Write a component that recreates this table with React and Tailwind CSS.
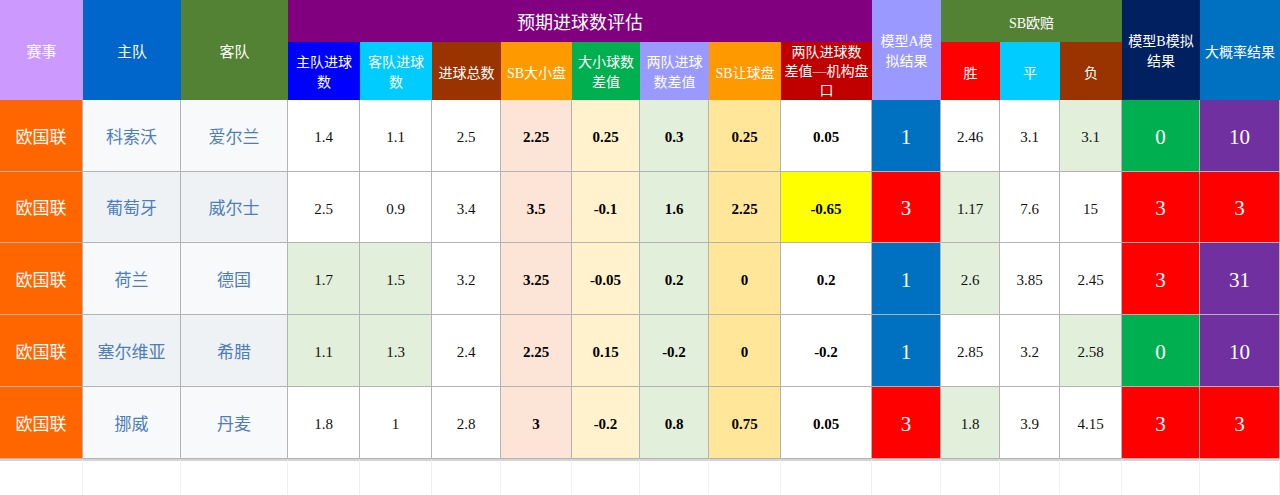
const rows = [
  { home: '科索沃', away: '爱尔兰', h: '1.4', a: '1.1', t: '2.5', ou: '2.25', oud: '0.25', gd: '0.3', hc: '0.25', hcd: '0.05', A: '1', w: '2.46', d: '3.1', l: '3.1', B: '0', P: '10' },
  { home: '葡萄牙', away: '威尔士', h: '2.5', a: '0.9', t: '3.4', ou: '3.5', oud: '-0.1', gd: '1.6', hc: '2.25', hcd: '-0.65', A: '3', w: '1.17', d: '7.6', l: '15', B: '3', P: '3' },
  { home: '荷兰', away: '德国', h: '1.7', a: '1.5', t: '3.2', ou: '3.25', oud: '-0.05', gd: '0.2', hc: '0', hcd: '0.2', A: '1', w: '2.6', d: '3.85', l: '2.45', B: '3', P: '31' },
  { home: '塞尔维亚', away: '希腊', h: '1.1', a: '1.3', t: '2.4', ou: '2.25', oud: '0.15', gd: '-0.2', hc: '0', hcd: '-0.2', A: '1', w: '2.85', d: '3.2', l: '2.58', B: '0', P: '10' },
  { home: '挪威', away: '丹麦', h: '1.8', a: '1', t: '2.8', ou: '3', oud: '-0.2', gd: '0.8', hc: '0.75', hcd: '0.05', A: '3', w: '1.8', d: '3.9', l: '4.15', B: '3', P: '3' },
];

const font = { fontFamily: '"Liberation Serif", "Noto Sans CJK SC", serif' };

const Head = ({ className, children }) => (
  <div className={`flex items-center justify-center text-center text-white ${className}`}>
    {children}
  </div>
);

const Cell = ({ bg, className = '', children }) => (
  <div className={`flex items-center justify-center pt-1 border-r border-b border-[#b3b3b3] ${bg} ${className}`}>
    {children}
  </div>
);

export default function App() {
  return (
    <div className="w-[1280px] h-[495px] bg-white overflow-hidden" style={font}>
      <div className="grid grid-cols-[83px_98px_107px_72px_72px_69px_71px_68px_69px_72px_91px_69px_59px_60px_62px_78px_80px] grid-rows-[42px_58px_72px_71px_72px_72px_72px_36px]">
        <Head className="row-span-2 bg-[#cc99ff] text-[15px] pt-1">赛事</Head>
        <Head className="row-span-2 bg-[#0066cc] text-[15px] pt-1">主队</Head>
        <Head className="row-span-2 bg-[#548235] text-[15px] pt-1">客队</Head>
        <Head className="col-span-8 bg-[#800080] text-[18px] pt-1">预期进球数评估</Head>
        <Head className="row-span-2 bg-[#9999ff] text-[14px] leading-[20px] pt-1">模型A模<br />拟结果</Head>
        <Head className="col-span-3 bg-[#548235] text-[14px] pt-1">SB欧赔</Head>
        <Head className="row-span-2 bg-[#002060] text-[14px] leading-[20px] pt-1">模型B模拟<br />结果</Head>
        <Head className="row-span-2 bg-[#0070c0] text-[14px] pt-1">大概率结果</Head>

        <Head className="bg-[#0000ff] text-[14px] leading-[20px] pt-1">主队进球<br />数</Head>
        <Head className="bg-[#00ccff] text-[14px] leading-[20px] pt-1">客队进球<br />数</Head>
        <Head className="bg-[#993300] text-[14px] pt-1">进球总数</Head>
        <Head className="bg-[#ff9900] text-[14px] pt-1">SB大小盘</Head>
        <Head className="bg-[#00b050] text-[14px] leading-[20px] pt-1">大小球数<br />差值</Head>
        <Head className="bg-[#9999ff] text-[14px] leading-[20px] pt-1">两队进球<br />数差值</Head>
        <Head className="bg-[#ff9900] text-[14px] pt-1">SB让球盘</Head>
        <Head className="bg-[#c00000] text-[14px] leading-[19px]">两队进球数<br />差值—机构盘<br />口</Head>
        <Head className="bg-[#ff0000] text-[14px] pt-1">胜</Head>
        <Head className="bg-[#00ccff] text-[14px] pt-1">平</Head>
        <Head className="bg-[#993300] text-[14px] pt-1">负</Head>

        {rows.map((r, i) => {
          const team = i % 2 === 0 ? 'bg-[#f7f9fb]' : 'bg-[#eef2f4]';
          const goals = i === 2 || i === 3 ? 'bg-[#e2efda]' : 'bg-white';
          const num = 'text-[15px] text-[#111]';
          const bold = 'text-[15px] font-bold text-black';
          const big = 'text-[21px] text-white';
          return [
            <Cell key={`c${i}`} bg="bg-[#ff6600]" className="text-[17px] text-white">欧国联</Cell>,
            <Cell key={`h${i}`} bg={team} className="text-[17px] text-[#4f7dba]">{r.home}</Cell>,
            <Cell key={`a${i}`} bg={team} className="text-[17px] text-[#4f7dba]">{r.away}</Cell>,
            <Cell key={`g1${i}`} bg={goals} className={num}>{r.h}</Cell>,
            <Cell key={`g2${i}`} bg={goals} className={num}>{r.a}</Cell>,
            <Cell key={`t${i}`} bg="bg-white" className={num}>{r.t}</Cell>,
            <Cell key={`ou${i}`} bg="bg-[#fce4d6]" className={bold}>{r.ou}</Cell>,
            <Cell key={`oud${i}`} bg="bg-[#fff2cc]" className={bold}>{r.oud}</Cell>,
            <Cell key={`gd${i}`} bg="bg-[#e2efda]" className={bold}>{r.gd}</Cell>,
            <Cell key={`hc${i}`} bg="bg-[#ffe699]" className={bold}>{r.hc}</Cell>,
            <Cell key={`hcd${i}`} bg={i === 1 ? 'bg-[#ffff00]' : 'bg-white'} className={bold}>{r.hcd}</Cell>,
            <Cell key={`A${i}`} bg={r.A === '1' ? 'bg-[#0070c0]' : 'bg-[#ff0000]'} className={big}>{r.A}</Cell>,
            <Cell key={`w${i}`} bg={i === 1 || i === 2 || i === 4 ? 'bg-[#e2efda]' : 'bg-white'} className={num}>{r.w}</Cell>,
            <Cell key={`d${i}`} bg="bg-white" className={num}>{r.d}</Cell>,
            <Cell key={`l${i}`} bg={i === 0 || i === 3 ? 'bg-[#e2efda]' : 'bg-white'} className={num}>{r.l}</Cell>,
            <Cell key={`B${i}`} bg={r.B === '0' ? 'bg-[#00b050]' : 'bg-[#ff0000]'} className={big}>{r.B}</Cell>,
            <Cell key={`P${i}`} bg={r.P === '3' ? 'bg-[#ff0000]' : 'bg-[#7030a0]'} className={big}>{r.P}</Cell>,
          ];
        })}

        {Array.from({ length: 17 }).map((_, i) => (
          <div key={`e${i}`} className="border-t-2 border-t-[#d4d4d4] border-r border-r-[#f1f1f1]" />
        ))}
      </div>
    </div>
  );
}
